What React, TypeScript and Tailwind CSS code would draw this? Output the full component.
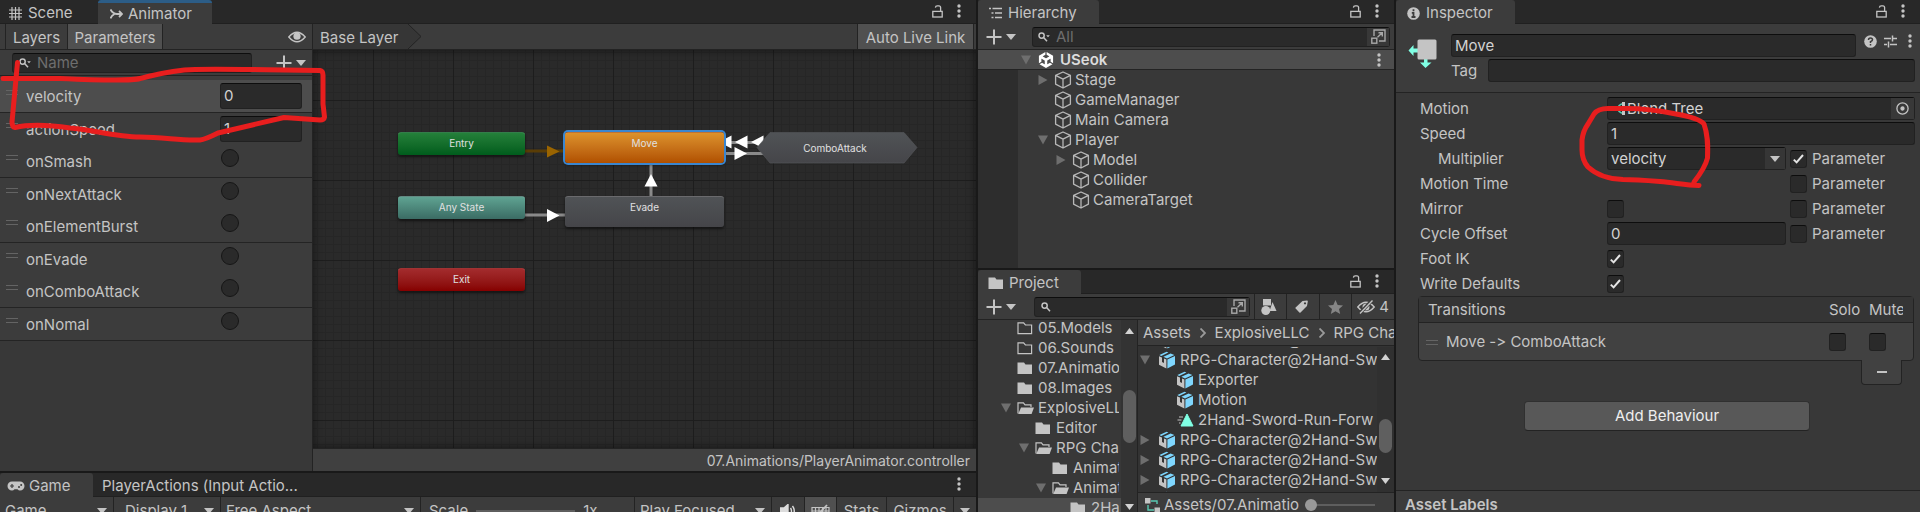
import React from "react";
import { SiUnity } from "react-icons/si";

/* ---------- icons ---------- */

function Dots() {
  return (
    <svg width="4" height="14" viewBox="0 0 4 14" fill="#c4c4c4" className="shrink-0">
      <circle cx="2" cy="2" r="1.7" />
      <circle cx="2" cy="7" r="1.7" />
      <circle cx="2" cy="12" r="1.7" />
    </svg>
  );
}

function Lock() {
  return (
    <svg width="11" height="13" viewBox="0 0 11 13" fill="none" stroke="#c4c4c4" strokeWidth="1.3" className="shrink-0">
      <rect x="0.8" y="6.4" width="9.4" height="5.6" />
      <path d="M8.6 6V2.6Q8.6 0.9 7 0.9H5.2Q3.6 0.9 3.4 2.6" />
    </svg>
  );
}

function ArrowDown({ color = "#c4c4c4" }: { color?: string }) {
  return (
    <svg width="10" height="6" viewBox="0 0 10 6" fill={color} className="pointer-events-none shrink-0">
      <path d="M0 0h10L5 6z" />
    </svg>
  );
}

function Plus() {
  return (
    <svg width="16" height="16" viewBox="0 0 16 16" stroke="#c4c4c4" strokeWidth="2" className="shrink-0">
      <path d="M8 0.5v15M0.5 8h15" />
    </svg>
  );
}

function AddButton({ label }: { label: string }) {
  return (
    <button aria-label={label} className="flex shrink-0 items-center gap-1">
      <Plus />
      <ArrowDown />
    </button>
  );
}

function SearchGlyph({ menu }: { menu?: boolean }) {
  return (
    <svg width="12" height="10" viewBox="0 0 12 10" fill="none" stroke="#c4c4c4" strokeWidth="1.5" className="shrink-0">
      <circle cx="3.6" cy="3.6" r="2.6" />
      <path d="M5.6 5.6L9 9.2" />
      {menu && <path d="M8.2 3.2h3.6L10 5.2z" fill="#c4c4c4" stroke="none" />}
    </svg>
  );
}

function PopOut() {
  return (
    <svg width="15" height="15" viewBox="0 0 15 15" fill="none" stroke="#a8a8a8" strokeWidth="1.4" className="shrink-0">
      <path d="M3 7V1h11v11H8" />
      <rect x="0.8" y="9.2" width="5" height="5" />
      <path d="M6.5 8.2L11 4M7.5 3.8h3.8v3.6" />
    </svg>
  );
}

function Foldout({ open, color = "#6e6e6e" }: { open?: boolean; color?: string }) {
  return (
    <svg width="10" height="10" viewBox="0 0 10 10" fill={color} className="shrink-0">
      {open ? <path d="M0 0.5h10L5 9.5z" /> : <path d="M0.5 0v10L9.5 5z" />}
    </svg>
  );
}

function Cube() {
  return (
    <svg width="18" height="18" viewBox="0 0 18 18" fill="none" stroke="#b8b8b8" strokeWidth="1.3" strokeLinejoin="round" className="shrink-0">
      <path d="M9 1L16.4 4.4V13.2L9 17L1.6 13.2V4.4zM1.6 4.4L9 8.2L16.4 4.4M9 8.2V17" />
    </svg>
  );
}

function Prefab() {
  return (
    <svg width="18" height="18" viewBox="0 0 18 18" className="shrink-0">
      <path d="M1 5.2L4 6.6V11L6 12V7.4L8.4 8.4V17.4L1 13.8z" fill="#c4c4c4" />
      <path d="M9.4 8.4L17 5V13.6L9.4 17.4z" fill="#7fd6fd" />
      <path d="M1.4 4L8.6 0.8L10.4 1.6L3.2 4.9zM5.4 5.8L12.6 2.6L16.4 4L9 7.4z" fill="#7fd6fd" />
    </svg>
  );
}

function Clip() {
  return (
    <svg width="18" height="14" viewBox="0 0 18 14" className="shrink-0">
      <path d="M11 1L17 13H5z" fill="#80ffe4" stroke="#80ffe4" strokeLinejoin="round" />
      <path d="M3 4h4M1.5 7h4M3 10h1.5" stroke="#c4c4c4" strokeWidth="1.2" />
    </svg>
  );
}

type FolderKind = "full" | "empty" | "open";

function Folder({ kind }: { kind: FolderKind }) {
  return (
    <svg width="17" height="14" viewBox="0 0 17 14" className="shrink-0">
      {kind === "full" && <path d="M0.5 1.5H7L8.5 3.5H15V13H0.5z" fill="#c4c4c4" />}
      {kind === "empty" && <path d="M1 1.8H6.6L8.4 4H14.6V12.6H1z" fill="none" stroke="#c4c4c4" strokeWidth="1.2" />}
      {kind === "open" && (
        <>
          <path d="M1 12.5V1.8H6.4L8 3.8H14V6" fill="none" stroke="#c4c4c4" strokeWidth="1.2" />
          <path d="M4 6.6H17L14.6 13H1.2z" fill="#c4c4c4" />
        </>
      )}
    </svg>
  );
}

function Eye() {
  return (
    <svg width="18" height="12" viewBox="0 0 18 12" className="shrink-0">
      <path d="M0.8 6Q9 -3.6 17.2 6Q9 15.6 0.8 6z" fill="none" stroke="#c4c4c4" strokeWidth="1.4" />
      <circle cx="9" cy="5.2" r="3.6" fill="#c4c4c4" />
    </svg>
  );
}

function Grip() {
  return <span className="h-[5px] w-3 shrink-0 border-y border-[#646464]" />;
}

/* ---------- shared parts ---------- */

const fieldClass =
  "min-w-0 rounded-[3px] border border-[#212121] border-t-[#0d0d0d] bg-[#2a2a2a] text-[#d2d2d2] outline-none";

function Tab({ icon, label, className = "" }: { icon: React.ReactNode; label: string; className?: string }) {
  return (
    <button className={`relative z-10 flex h-6 shrink-0 items-center rounded-t-[3px] bg-[#3c3c3c] pt-0.5 ${className}`}>
      {icon}
      {label}
    </button>
  );
}

function TabBar({ children, lock = true }: { children: React.ReactNode; lock?: boolean }) {
  return (
    <div className="flex h-6 shrink-0 items-center bg-[#282828] shadow-[inset_0_-1px_#202020]">
      {children}
      <div className="ml-auto flex items-center gap-3.5 pr-[15px] pb-0.5">
        {lock && <Lock />}
        <Dots />
      </div>
    </div>
  );
}

function Check({ label, checked }: { label: string; checked?: boolean }) {
  return (
    <span className="grid shrink-0 place-items-center">
      <input
        type="checkbox"
        aria-label={label}
        defaultChecked={checked}
        className="peer col-start-1 row-start-1 h-[18px] w-[17px] appearance-none rounded-[3px] border border-[#212121] border-t-[#0d0d0d] bg-[#2a2a2a]"
      />
      <svg
        width="11"
        height="10"
        viewBox="0 0 11 10"
        fill="none"
        stroke="#e4e4e4"
        strokeWidth="2"
        className="pointer-events-none invisible col-start-1 row-start-1 peer-checked:visible"
      >
        <path d="M0.8 5.6L3.6 8.4L10 1" />
      </svg>
    </span>
  );
}

/* ---------- animator ---------- */

const parameters = [
  { name: "velocity", value: "0", line: true, selected: true },
  { name: "actionSpeed", value: "1" },
  { name: "onSmash", line: true },
  { name: "onNextAttack" },
  { name: "onElementBurst", line: true },
  { name: "onEvade" },
  { name: "onComboAttack", line: true },
  { name: "onNomal", line: true },
];

function ParameterList() {
  return (
    <div className="flex w-[312px] shrink-0 flex-col bg-[#383838]">
      <div className="flex h-[26px] items-center justify-between border-b border-[#232323] bg-[#3c3c3c] pr-1.5 pl-3">
        <label className={`flex h-5 w-60 items-center gap-1.5 px-1.5 ${fieldClass}`}>
          <SearchGlyph menu />
          <input aria-label="Search parameters" placeholder="Name" className="w-full min-w-0 bg-transparent outline-none placeholder:text-[#6e6e6e]" />
        </label>
        <AddButton label="Add parameter" />
      </div>
      <ul className="bg-[#3c3c3c] pt-1">
        {parameters.map((p) => (
          <li
            key={p.name}
            className={`box-content flex h-8 items-start pr-2.5 pl-1.5 ${p.line ? "border-b border-[#242424]" : ""} ${p.selected ? "bg-[#4d4d4d]" : ""}`}
          >
            <span className="flex pt-2.5">
              <Grip />
            </span>
            <span className="flex-1 pt-[7px] pl-2">{p.name}</span>
            <span className="flex w-[82px] pt-[3px]">
              {p.value ? (
                <input aria-label={p.name} defaultValue={p.value} className={`h-[26px] w-full px-[3px] pb-0.5 ${fieldClass}`} />
              ) : (
                <input
                  type="radio"
                  aria-label={p.name}
                  className="mt-px ml-px size-[18px] appearance-none rounded-full border border-[#161616] bg-[#2a2a2a] checked:bg-[#c4c4c4]"
                />
              )}
            </span>
          </li>
        ))}
      </ul>
    </div>
  );
}

function GraphNode({ label, className }: { label: string; className: string }) {
  return (
    <button
      className={`absolute flex justify-center rounded-[3px] border-t border-t-white/20 pt-[3px] text-[10px] leading-[14px] text-[#e0e0e0] shadow-[0_2px_3px_rgba(0,0,0,0.5)] ${className}`}
    >
      {label}
    </button>
  );
}

function Graph() {
  return (
    <div className="relative min-h-0 flex-1 overflow-hidden bg-[#2a2a2a]">
      <svg className="absolute inset-0 h-full w-full">
        <defs>
          <pattern id="minor" x="60" y="50" width="8" height="8" patternUnits="userSpaceOnUse">
            <path d="M0.5 0V8M0 0.5H8" stroke="#262626" />
          </pattern>
          <pattern id="major" x="60" y="50" width="80" height="80" patternUnits="userSpaceOnUse">
            <path d="M0.5 0V80M0 0.5H80" stroke="#1d1d1d" />
          </pattern>
          <linearGradient id="combo" x1="0" y1="0" x2="0" y2="1">
            <stop offset="0" stopColor="#505356" />
            <stop offset="1" stopColor="#454549" />
          </linearGradient>
        </defs>
        <rect width="100%" height="100%" fill="url(#minor)" />
        <rect width="100%" height="100%" fill="url(#major)" />
        <path d="M212 101H252" stroke="#5a3d06" strokeWidth="3" />
        <path d="M234 95.5V107.5L246.5 101.5z" fill="#9a6400" />
        <path d="M212 165H252" stroke="#8a8a8a" strokeWidth="3" />
        <path d="M234 159V172L246.5 165.5z" fill="#fff" />
        <path d="M338 114V146" stroke="#8a8a8a" strokeWidth="3" />
        <path d="M331.5 136.5H344.5L338 124z" fill="#fff" />
        <path d="M411 92.5H452M411 103.5H452" stroke="#8a8a8a" strokeWidth="3" />
        <path d="M418.5 85.5V98.5L406 92zM434.5 85.5V98.5L422 92zM450.5 85.5V98.5L438 92z" fill="#fff" />
        <path d="M421.5 97V110L434 103.5z" fill="#fff" />
        <path d="M444 97.5L457 82.5H591L604 97.5L591 113H457z" fill="url(#combo)" stroke="#55585b" strokeWidth="0.6" />
      </svg>
      <GraphNode label="Entry" className="top-[82px] left-[85px] h-[23px] w-[127px] bg-linear-to-b from-[#24803a] to-[#005c1c]" />
      <GraphNode
        label="Move"
        className="top-[82px] left-[252px] h-[31px] w-[159px] bg-linear-to-b from-[#dc922c] to-[#b05000] ring-2 ring-[#3a86d0]"
      />
      <GraphNode label="Any State" className="top-[146px] left-[85px] h-[23px] w-[127px] bg-linear-to-b from-[#5fa392] to-[#3b6c64]" />
      <GraphNode label="Evade" className="top-[146px] left-[252px] h-[31px] w-[159px] bg-linear-to-b from-[#505356] to-[#454549]" />
      <GraphNode label="Exit" className="top-[218px] left-[85px] h-[23px] w-[127px] bg-linear-to-b from-[#a32b2d] to-[#860000]" />
      <button className="absolute top-[82px] left-[444px] h-[31px] w-40 pt-px pr-1 text-[10px] text-[#e0e0e0]">ComboAttack</button>
      <div className="pointer-events-none absolute inset-0 shadow-[inset_0_0_8px_rgba(0,0,0,0.5)]" />
    </div>
  );
}

function AnimatorPanel() {
  return (
    <section className="relative flex min-h-0 flex-[471] flex-col bg-[#383838]">
      <TabBar>
        <button className="flex w-[98px] items-center gap-1.5 pt-0.5 pl-[9px]">
          <svg width="13" height="13" viewBox="0 0 13 13" stroke="#c4c4c4" strokeWidth="1.2">
            <path d="M3 0v13M10 0v13M6.5 0v13M0 3h13M0 6.5h13M0 10h13" />
          </svg>
          Scene
        </button>
        <Tab
          className="w-[114px] gap-[5px] border-t-3 border-[#2c5d87] pl-3 [&]:pt-0"
          label="Animator"
          icon={
            <svg width="13" height="12" viewBox="0 0 13 12" fill="none" stroke="#c4c4c4" strokeWidth="1.8">
              <path d="M0.5 1.5Q3 6 7 6H11M0.5 10.5Q1.5 7.5 4.5 6M9 3L12 6L9 9" />
            </svg>
          }
        />
      </TabBar>
      <div className="flex h-[26px] shrink-0 border-b border-[#232323] bg-[#3c3c3c]">
        <div className="flex w-[312px] shrink-0 items-stretch pl-[5px]">
          <button className="w-[63px] border-x border-[#232323] px-[5px] pt-0.5">Layers</button>
          <button className="w-[95px] border-r border-[#232323] bg-[#505050] pt-0.5">Parameters</button>
          <button aria-label="Toggle parameter panel" className="ml-auto pr-1.5">
            <Eye />
          </button>
        </div>
        <button className="flex items-center border-l border-[#232323] bg-[#363636] pt-0.5 pr-0.5 pl-[7px]">Base Layer</button>
        <svg width="22" height="25" viewBox="0 0 22 25" className="shrink-0">
          <path d="M0 0H8L21 12.5L8 25H0z" fill="#363636" />
          <path d="M8 0L21 12.5L8 25" fill="none" stroke="#232323" />
        </svg>
        <button className="mr-0.5 ml-auto w-[117px] border-x border-[#232323] bg-[#505050] pt-0.5">Auto Live Link</button>
      </div>
      <div className="flex min-h-0 flex-1">
        <ParameterList />
        <div className="flex min-w-0 flex-1 flex-col border-l border-[#232323]">
          <Graph />
          <div className="flex h-[23px] shrink-0 items-center justify-end border-t border-[#232323] bg-[#404040] pt-0.5 pr-1.5 text-sm">
            07.Animations/PlayerAnimator.controller
          </div>
        </div>
      </div>
      <svg width="330" height="150" className="pointer-events-none absolute top-0 left-0 z-20" fill="none" stroke="#e81e1e" strokeWidth="5" strokeLinecap="round" strokeLinejoin="round">
        <path d="M3 78.5H60Q95 80 115 80T140 78.5C155 75 170 70 195 69.5S260 69.5 320 70.5Q323 71 323 75V104L324.5 117Q324 120 320 120L284 117.5L218 133Q205 139.5 200 140C180 141 165 137 140 137S90 129 70 128Q35 123 15 127.5Q12 127 12 122C13 110 15 90 17.5 62.5" />
      </svg>
    </section>
  );
}

/* ---------- game ---------- */

function ToolbarSelect({ value, className }: { value: string; className: string }) {
  return (
    <span className={`grid shrink-0 items-center border-r border-[#232323] ${className}`}>
      <select aria-label={value} className="col-start-1 row-start-1 w-full appearance-none bg-transparent outline-none">
        <option>{value}</option>
      </select>
      <span className="pointer-events-none col-start-1 row-start-1 mr-1.5 justify-self-end">
        <ArrowDown />
      </span>
    </span>
  );
}

function GamePanel() {
  return (
    <section className="flex min-h-0 flex-[39] flex-col overflow-hidden bg-[#282828]">
      <TabBar lock={false}>
        <Tab
          label="Game"
          className="w-[93px] gap-1 pl-[7px]"
          icon={
            <svg width="18" height="10" viewBox="0 0 18 10">
              <path d="M5 0.5H13A4.5 4.5 0 0 1 13 9.5Q11.5 9.5 10.5 8.2H7.5Q6.5 9.5 5 9.5A4.5 4.5 0 0 1 5 0.5z" fill="#c4c4c4" />
              <path d="M5 3v4M3 5h4" stroke="#3c3c3c" strokeWidth="1.2" />
              <circle cx="12" cy="6" r="1" fill="#3c3c3c" />
              <circle cx="14.2" cy="4" r="1" fill="#3c3c3c" />
            </svg>
          }
        />
        <button className="pt-0.5 pl-[9px]">PlayerActions (Input Actio...</button>
      </TabBar>
      <div className="flex h-7 shrink-0 items-stretch bg-[#3c3c3c]">
        <ToolbarSelect value="Game" className="w-[114px] pl-[5px]" />
        <ToolbarSelect value="Display 1" className="w-[107px] pl-[11px]" />
        <ToolbarSelect value="Free Aspect" className="w-[200px] pl-[5px]" />
        <label className="flex flex-1 items-center gap-2 border-r border-[#232323] pl-2">
          Scale
          <input type="range" aria-label="Scale" className="h-0.5 w-[99px] appearance-none bg-[#5e5e5e] [&::-webkit-slider-thumb]:appearance-none" />
          1x
        </label>
        <ToolbarSelect value="Play Focused" className="w-[137px] pl-[5px]" />
        <button aria-label="Mute audio" className="flex w-[33px] items-center justify-center border-r border-[#232323]">
          <svg width="16" height="14" viewBox="0 0 16 14" fill="none" stroke="#dcdcdc" strokeWidth="1.4">
            <path d="M0.5 4H3V10H0.5z M4 4L8 0.5V13.5L4 10z" fill="#dcdcdc" />
            <path d="M10.5 4Q12.5 7 10.5 10M12.5 2Q16 7 12.5 12" />
          </svg>
        </button>
        <button aria-label="Shortcuts" className="flex w-8 items-center justify-center border-r border-[#232323] bg-[#505050]">
          <svg width="19" height="15" viewBox="0 0 19 15" fill="none" stroke="#c4c4c4" strokeWidth="1.2">
            <path d="M1 3.5H18V14H1zM1 7H18M1 10.5H18M4.5 3.5V14M8 3.5V14M11.5 3.5V14M15 3.5V14" />
            <path d="M3 15L16 1" strokeWidth="1.8" />
          </svg>
        </button>
        <button className="w-[50px] border-r border-[#232323]">Stats</button>
        <button className="w-[67px] border-r border-[#232323]">Gizmos</button>
        <button aria-label="Gizmo options" className="flex w-[22px] items-center justify-center">
          <ArrowDown />
        </button>
      </div>
    </section>
  );
}

/* ---------- hierarchy ---------- */

const objects: { name: string; className: string; open?: boolean; fold?: boolean }[] = [
  { name: "Stage", className: "pl-5", fold: true },
  { name: "GameManager", className: "pl-5" },
  { name: "Main Camera", className: "pl-5" },
  { name: "Player", className: "pl-5", fold: true, open: true },
  { name: "Model", className: "pl-[38px]", fold: true },
  { name: "Collider", className: "pl-[38px]" },
  { name: "CameraTarget", className: "pl-[38px]" },
];

function HierarchyPanel() {
  return (
    <section className="flex min-h-0 flex-[268] flex-col overflow-hidden bg-[#383838]">
      <TabBar>
        <Tab
          label="Hierarchy"
          className="w-[121px] gap-1.5 pl-[11px]"
          icon={
            <svg width="13" height="12" viewBox="0 0 13 12" stroke="#c4c4c4" strokeWidth="1.5">
              <path d="M0 1.5H2M3.5 1.5H13M2.5 6H4.5M6 6H13M2.5 10.5H4.5M6 10.5H13" />
            </svg>
          }
        />
      </TabBar>
      <div className="flex h-[26px] shrink-0 items-center border-b border-[#232323] bg-[#3c3c3c] pr-1 pl-2">
        <AddButton label="Create object" />
        <label className={`ml-4 flex h-5 flex-1 items-center gap-1.5 pl-[5px] ${fieldClass}`}>
          <SearchGlyph menu />
          <input aria-label="Search hierarchy" placeholder="All" className="w-full min-w-0 bg-transparent outline-none placeholder:text-[#6e6e6e]" />
          <span className="flex h-full w-[22px] shrink-0 items-center justify-center bg-[#383838]">
            <PopOut />
          </span>
        </label>
      </div>
      <div className="flex h-5 shrink-0 items-center border-b border-[#232323] bg-[#4d4d4d] pr-[13px] pl-[43px] font-semibold text-[#dcdcdc]">
        <Foldout open />
        <SiUnity size={16} className="mr-1.5 ml-[7px] shrink-0 text-white" />
        USeok
        <span className="ml-auto flex">
          <Dots />
        </span>
      </div>
      <div className="flex flex-1">
        <div className="w-10 shrink-0 bg-[#2d2d2d]" />
        <ul className="flex-1">
          {objects.map((o) => (
            <li key={o.name} className={`flex h-5 items-center ${o.className}`}>
              <span className="flex w-4">{o.fold && <Foldout open={o.open} />}</span>
              <Cube />
              <span className="pl-[3px]">{o.name}</span>
            </li>
          ))}
        </ul>
      </div>
    </section>
  );
}

/* ---------- project ---------- */

const folders: { name: string; kind: FolderKind; className: string; open?: boolean }[] = [
  { name: "05.Models", kind: "empty", className: "pl-[23px]" },
  { name: "06.Sounds", kind: "empty", className: "pl-[23px]" },
  { name: "07.Animations", kind: "full", className: "pl-[23px]" },
  { name: "08.Images", kind: "full", className: "pl-[23px]" },
  { name: "ExplosiveLLC", kind: "open", className: "pl-[23px]", open: true },
  { name: "Editor", kind: "full", className: "pl-[41px]" },
  { name: "RPG Cha", kind: "open", className: "pl-[41px]", open: true },
  { name: "Animations", kind: "full", className: "pl-[58px]" },
  { name: "Animations", kind: "open", className: "pl-[58px]", open: true },
  { name: "2Ha", kind: "full", className: "bg-[#4d4d4d] pl-[76px]" },
];

const assets: { name: string; child?: boolean; open?: boolean; clip?: boolean }[] = [
  { name: "RPG-Character@2Hand-Sw" },
  { name: "RPG-Character@2Hand-Sw", open: true },
  { name: "Exporter", child: true },
  { name: "Motion", child: true },
  { name: "2Hand-Sword-Run-Forw", child: true, clip: true },
  { name: "RPG-Character@2Hand-Sw" },
  { name: "RPG-Character@2Hand-Sw" },
  { name: "RPG-Character@2Hand-Sw" },
  { name: "RPG-Character@2Hand-Sw" },
];

function Arrow({ up }: { up?: boolean }) {
  return (
    <svg width="9" height="6" viewBox="0 0 9 6" fill="#d2d2d2">
      {up ? <path d="M0 6h9L4.5 0z" /> : <path d="M0 0h9L4.5 6z" />}
    </svg>
  );
}

function ProjectPanel() {
  const filter = "flex h-full items-center justify-center border-l border-[#232323]";
  return (
    <section className="flex min-h-0 flex-[242] flex-col overflow-hidden bg-[#383838]">
      <TabBar>
        <Tab label="Project" className="w-[103px] gap-1 pl-2.5" icon={<Folder kind="full" />} />
      </TabBar>
      <div className="flex h-[26px] shrink-0 items-center border-b border-[#232323] bg-[#3c3c3c] pl-2">
        <AddButton label="Create asset" />
        <label className={`mr-1 ml-[18px] flex h-5 flex-1 items-center pl-1.5 ${fieldClass}`}>
          <SearchGlyph />
          <input aria-label="Search assets" className="w-full min-w-0 bg-transparent outline-none" />
          <span className="flex h-full w-[22px] shrink-0 items-center justify-center bg-[#383838]">
            <PopOut />
          </span>
        </label>
        <button aria-label="Search by type" className={`w-8 pr-1 ${filter}`}>
          <svg width="16" height="16" viewBox="0 0 16 16" fill="#c4c4c4">
            <rect x="2" y="0" width="8" height="6.5" />
            <circle cx="4.8" cy="11.5" r="4.5" />
            <path d="M11.5 3L15.5 12H8.5z" />
          </svg>
        </button>
        <button aria-label="Search by label" className={`w-[33px] pr-1 ${filter}`}>
          <svg width="13" height="13" viewBox="0 0 13 13" fill="#c4c4c4">
            <path fillRule="evenodd" d="M7.5 1L12 0.5Q13 0.5 12.8 1.5L12 6L5.5 12.5Q5 13 4.4 12.4L0.6 8.6Q0 8 0.6 7.5zM10 2.2a1.1 1.1 0 1 0 0.01 0z" />
          </svg>
        </button>
        <button aria-label="Save search" className={`w-8 pr-px ${filter}`}>
          <svg width="15" height="14" viewBox="0 0 15 14" fill="#858585">
            <path d="M7.5 0L9.7 4.9L15 5.4L11 8.9L12.2 14L7.5 11.3L2.8 14L4 8.9L0 5.4L5.3 4.9z" />
          </svg>
        </button>
        <button className={`w-[43px] gap-1 ${filter}`}>
          <svg width="18" height="14" viewBox="0 0 18 14" fill="none" stroke="#c4c4c4" strokeWidth="1.4">
            <path d="M0.8 7Q9 -2.6 17.2 7Q9 16.6 0.8 7z" />
            <circle cx="9" cy="7" r="2.8" fill="#c4c4c4" />
            <path d="M2.5 13.5L15 0.5" stroke="#3c3c3c" strokeWidth="3.4" />
            <path d="M3 13.5L15.5 0.5" />
          </svg>
          4
        </button>
      </div>
      <div className="flex min-h-0 flex-1">
        <div className="flex w-[143px] shrink-0 flex-col overflow-hidden">
          <ul className="-mt-0.5 shrink-0">
            {folders.map((f, i) => (
              <li key={i} className={`flex h-5 items-center ${f.className}`}>
                <span className="flex w-4 shrink-0">{f.open && <Foldout open />}</span>
                <Folder kind={f.kind} />
                <span className="mr-0.5 min-w-0 overflow-hidden pl-1 whitespace-nowrap">{f.name}</span>
              </li>
            ))}
          </ul>
        </div>
        <div className="flex w-4 shrink-0 flex-col items-center bg-[#333333] pt-2 pb-0.5">
          <Arrow up />
          <div className="flex-[56]" />
          <div className="w-[13px] flex-[54] rounded-full bg-[#5f5f5f]" />
          <div className="flex-[61]" />
          <Arrow />
        </div>
        <div className="flex min-w-0 flex-1 flex-col border-l border-[#232323]">
          <nav className="flex h-[26px] shrink-0 items-center gap-[9px] overflow-hidden border-b border-[#232323] bg-[#3c3c3c] pl-[5px] whitespace-nowrap">
            <a href="#assets">Assets</a>
            <Chevron />
            <a href="#explosive">ExplosiveLLC</a>
            <Chevron />
            <a href="#rpg">RPG Character</a>
          </nav>
          <div className="flex min-h-0 flex-1 bg-[#333333] pt-px">
            <div className="min-w-0 flex-1 overflow-hidden">
              <ul className="-mt-[17px]">
                {assets.map((a, i) => (
                  <li key={i} className={`flex h-5 items-center gap-1 whitespace-nowrap ${a.child ? "pl-[38px]" : "pl-0.5"}`}>
                    {!a.child && (
                      <span className="flex w-3.5 shrink-0">
                        <Foldout open={a.open} />
                      </span>
                    )}
                    {a.clip ? <Clip /> : <Prefab />}
                    {a.name}
                  </li>
                ))}
              </ul>
            </div>
            <div className="flex w-[17px] shrink-0 flex-col items-center bg-[#303030] pt-[7px] pb-2">
              <Arrow up />
              <div className="flex-[59]" />
              <div className="w-[13px] flex-[34] rounded-full bg-[#5f5f5f]" />
              <div className="flex-[25]" />
              <Arrow />
            </div>
          </div>
          <div className="h-5 shrink-0 border-t border-[#232323] bg-[#3c3c3c]">
            <div className="flex h-6 items-center pr-[19px] pl-[7px]">
              <svg width="15" height="15" viewBox="0 0 15 15" className="mr-1 shrink-0">
                <path d="M6 3H12V6M3 7V12H9" fill="none" stroke="#58c9b2" strokeWidth="1.4" />
                <rect width="5.5" height="5.5" fill="#c4c4c4" />
                <rect x="9.5" y="9.5" width="5.5" height="5.5" fill="#c4c4c4" />
              </svg>
              <span className="w-[141px] shrink-0 overflow-hidden whitespace-nowrap">Assets/07.Animatio</span>
              <input
                type="range"
                aria-label="Icon size"
                defaultValue={0}
                className="h-0.5 min-w-0 flex-1 appearance-none bg-[#5e5e5e] [&::-webkit-slider-thumb]:size-3 [&::-webkit-slider-thumb]:appearance-none [&::-webkit-slider-thumb]:rounded-full [&::-webkit-slider-thumb]:bg-[#999999]"
              />
            </div>
          </div>
        </div>
      </div>
    </section>
  );
}

function Chevron() {
  return (
    <svg width="6" height="10" viewBox="0 0 6 10" fill="none" stroke="#9a9a9a" strokeWidth="1.8" className="shrink-0">
      <path d="M0.5 0.5L5 5L0.5 9.5" />
    </svg>
  );
}

/* ---------- inspector ---------- */

function Row({ id, label, indent, param, children }: { id?: string; label: string; indent?: boolean; param?: "on" | "off"; children?: React.ReactNode }) {
  return (
    <div className="flex h-[25px] items-center">
      <label htmlFor={id} className={`w-[187px] shrink-0 ${indent ? "pl-[18px]" : ""}`}>
        {label}
      </label>
      <div className="flex min-w-0 flex-1 items-center">{children}</div>
      {param && (
        <label className="ml-1 flex w-[125px] shrink-0 items-center gap-[5px]">
          <Check label={`${label} parameter`} checked={param === "on"} />
          Parameter
        </label>
      )}
    </div>
  );
}

function InspectorPanel() {
  return (
    <section className="relative flex min-h-0 flex-col overflow-hidden bg-[#383838]">
      <TabBar>
        <Tab
          label="Inspector"
          className="w-[119px] gap-1.5 pl-[11px]"
          icon={
            <svg width="13" height="13" viewBox="0 0 13 13">
              <circle cx="6.5" cy="6.5" r="6.3" fill="#c4c4c4" />
              <path d="M6.5 2.2V4.2M4.8 5.8H6.5V10M4.5 10H8.5" stroke="#3c3c3c" strokeWidth="1.8" fill="none" />
            </svg>
          }
        />
      </TabBar>
      <div className="flex h-[69px] shrink-0 border-b border-[#232323] bg-[#3c3c3c] pt-2.5 pl-3">
        <svg width="29" height="30" viewBox="0 0 28 30" className="mt-1 mr-3.5 shrink-0">
          <path d="M10 10.5H5V7L0 12.5L5 18V14.5H10zM15.5 20V24.5H11.5L17 30L23 24.5H19V20z" fill="#80ffe4" />
          <rect x="9" y="1.5" width="19" height="20" rx="1.5" fill="#c4c4c4" />
        </svg>
        <div className="flex min-w-0 flex-1 flex-col gap-0.5">
          <div className="flex pr-2">
            <input aria-label="State name" defaultValue="Move" className={`h-[23px] flex-1 px-[3px] ${fieldClass}`} />
            <div className="flex h-3.5 items-center gap-[7px] pl-2">
              <svg width="13" height="13" viewBox="0 0 13 13">
                <circle cx="6.5" cy="6.5" r="6.3" fill="#c4c4c4" />
                <path d="M4.5 5Q4.5 3 6.5 3T8.5 4.8Q8.5 5.8 6.5 6.6V8M6.5 9V10.6" stroke="#3c3c3c" strokeWidth="1.5" fill="none" />
              </svg>
              <svg width="13" height="13" viewBox="0 0 13 13" stroke="#c4c4c4" strokeWidth="1.5">
                <path d="M0 3.5H7M9 3.5H13M8.5 0.5V6.5M0 9.5H3M6 9.5H13M4.5 6.5V12.5" />
              </svg>
              <span className="flex pl-1">
                <Dots />
              </span>
            </div>
          </div>
          <label className="flex items-center gap-[11px] pr-[5px]">
            Tag
            <input className={`h-[23px] flex-1 px-[3px] ${fieldClass}`} />
          </label>
        </div>
      </div>
      <div className="flex shrink-0 flex-col pt-[3px] pr-[5px] pl-6">
        <Row label="Motion" id="motion">
          <span className={`flex h-[23px] w-full items-center pl-2 ${fieldClass}`}>
            <svg width="9" height="13" viewBox="0 0 9 13" className="shrink-0">
              <path d="M7 1.5Q2 3 2 6.5T7 11.5M0 6.5H4" stroke="#58c9b2" strokeWidth="1.5" fill="none" />
              <path d="M6 0H9V4H6zM6 9H9V13H6zM4.5 5H8V8H4.500z" fill="#c4c4c4" />
            </svg>
            <input id="motion" readOnly value="Blend Tree" className="min-w-0 flex-1 bg-transparent pl-0.5 outline-none" />
            <button aria-label="Pick motion" className="flex h-full w-[23px] items-center justify-center bg-[#383838]">
              <svg width="13" height="13" viewBox="0 0 13 13" fill="none" stroke="#c4c4c4" strokeWidth="1.3">
                <circle cx="6.5" cy="6.5" r="5.6" />
                <circle cx="6.5" cy="6.5" r="1.5" fill="#c4c4c4" />
              </svg>
            </button>
          </span>
        </Row>
        <Row label="Speed" id="speed">
          <input id="speed" defaultValue="1" className={`h-[23px] w-full px-[3px] ${fieldClass}`} />
        </Row>
        <Row label="Multiplier" id="multiplier" indent param="on">
          <span className="grid w-full">
            <select id="multiplier" className={`col-start-1 row-start-1 h-[23px] w-full appearance-none px-[3px] ${fieldClass}`}>
              <option>velocity</option>
            </select>
            <span className="pointer-events-none col-start-1 row-start-1 m-px flex w-5 items-center justify-center justify-self-end bg-[#363636]">
              <ArrowDown />
            </span>
          </span>
        </Row>
        <Row label="Motion Time" param="off" />
        <Row label="Mirror" param="off">
          <Check label="Mirror" />
        </Row>
        <Row label="Cycle Offset" id="cycle" param="off">
          <input id="cycle" defaultValue="0" className={`h-[23px] w-full px-[3px] ${fieldClass}`} />
        </Row>
        <Row label="Foot IK">
          <Check label="Foot IK" checked />
        </Row>
        <Row label="Write Defaults">
          <Check label="Write Defaults" checked />
        </Row>
      </div>
      <div className="mr-1.5 ml-[22px] shrink-0 rounded-[4px] border border-[#232323] bg-[#414141]">
        <table className="w-full table-fixed text-left">
          <thead className="bg-[#353535]">
            <tr className="h-[25px] border-b border-[#232323]">
              <th className="pt-0.5 pl-[9px] font-normal">Transitions</th>
              <th className="w-10 pt-0.5 font-normal">Solo</th>
              <th className="w-11 pt-0.5 font-normal">
                <span className="block w-[34px] overflow-hidden">Mute</span>
              </th>
            </tr>
          </thead>
          <tbody>
            <tr className="h-[38px]">
              <td className="pt-0.5 pl-[7px]">
                <span className="flex items-center gap-2">
                  <Grip />
                  Move -&gt; ComboAttack
                </span>
              </td>
              <td className="pt-0.5">
                <span className="flex">
                  <Check label="Solo" />
                </span>
              </td>
              <td className="pt-0.5">
                <span className="flex">
                  <Check label="Mute" />
                </span>
              </td>
            </tr>
          </tbody>
        </table>
      </div>
      <button
        aria-label="Remove transition"
        className="mr-[18px] -mt-px flex h-[25px] w-[41px] shrink-0 items-center justify-center self-end rounded-b-[4px] border border-t-0 border-[#232323] bg-[#414141]"
      >
        <span className="h-0.5 w-2.5 bg-[#c4c4c4]" />
      </button>
      <button className="mt-4 ml-[18px] h-[30px] w-[286px] shrink-0 self-center rounded-[4px] border border-[#303030] border-b-[#232323] bg-[#585858] text-[#eeeeee]">
        Add Behaviour
      </button>
      <h2 className="mt-auto h-[22px] shrink-0 border-t border-[#232323] bg-[#3c3c3c] pt-1 pl-[9px] font-semibold">Asset Labels</h2>
      <svg width="330" height="200" className="pointer-events-none absolute top-0 left-0 z-20" fill="none" stroke="#e81e1e" strokeWidth="5" strokeLinecap="round" strokeLinejoin="round">
        <path d="M303 185.500C290 185 280 183 264 181.500C245 180 235 179.500 227 179.500Q205 179 192 167Q186 160 186 150V140Q187 131 192 124L198 114Q202 108.500 212 108.500H231C245 108.500 265 111 280 114Q303 118 308 124C312 135 312 145 311.500 158Q309 168 298 182" />
      </svg>
    </section>
  );
}

export default function App() {
  return (
    <main className="grid h-screen grid-cols-[976fr_416fr_524fr] grid-rows-[minmax(0,1fr)] gap-0.5 overflow-hidden bg-[#191919] font-['Inter',sans-serif] text-[15px] leading-5 text-[#c4c4c4] [font-feature-settings:'calt'_0]">
      <div className="flex min-h-0 min-w-0 flex-col gap-0.5">
        <AnimatorPanel />
        <GamePanel />
      </div>
      <div className="flex min-h-0 min-w-0 flex-col gap-0.5">
        <HierarchyPanel />
        <ProjectPanel />
      </div>
      <InspectorPanel />
    </main>
  );
}
